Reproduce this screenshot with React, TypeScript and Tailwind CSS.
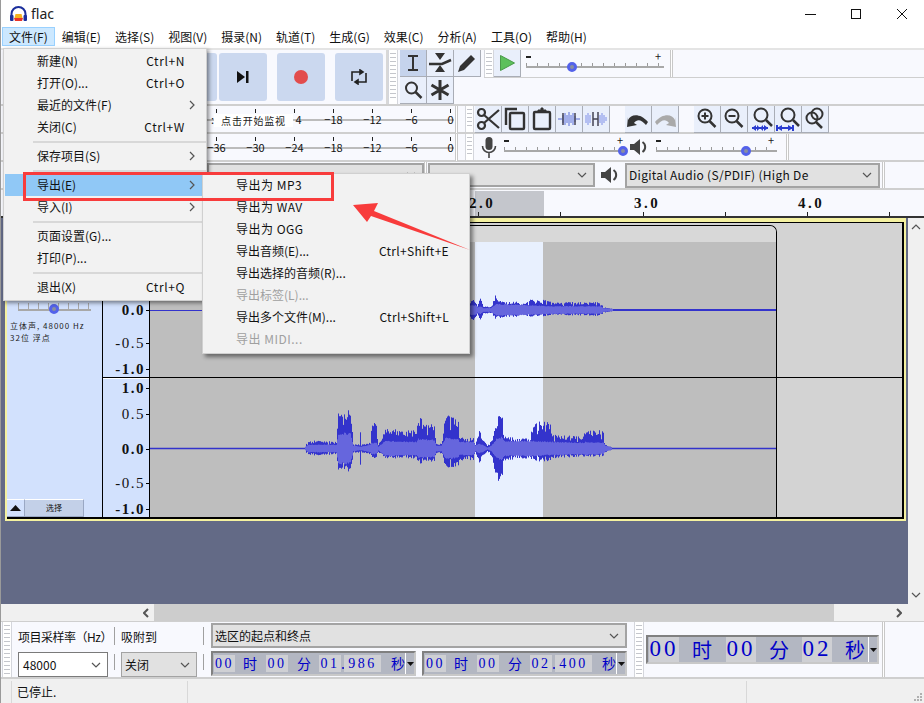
import React from "react";

const grip =
  "bg-[repeating-linear-gradient(to_bottom,#c4c6cc_0,#c4c6cc_1px,transparent_1px,transparent_4px)]";

function Gripper({ className = "" }: { className?: string }) {
  return (
    <div className={`shrink-0 border-x border-[#d4d6dc] bg-white px-[1px] py-[3px] ${className}`}>
      <div className={`h-full w-full ${grip}`} />
    </div>
  );
}

function ToolBtn({ active, children }: { active?: boolean; children?: React.ReactNode }) {
  return (
    <div
      className={`flex h-[27px] w-[27px] shrink-0 items-center justify-center border-b border-r border-[#a9adb6] ${
        active ? "bg-[#c5d3ec]" : "bg-[#e9effb]"
      }`}
    >
      {children}
    </div>
  );
}

function Ico({ children, w = 24, h = 24, className = "" }: { children: React.ReactNode; w?: number; h?: number; className?: string }) {
  return (
    <svg width={w} height={h} viewBox={`0 0 ${w} ${h}`} fill="none" stroke="#333" strokeWidth="2" className={className}>
      {children}
    </svg>
  );
}

function Slider({ width, knob }: { width: number; knob: number }) {
  // knob is px from the left of the track
  return (
    <div className="relative h-[24px] shrink-0" style={{ width }}>
      <span className="absolute left-0 top-[6px] h-[1.5px] w-[5px] bg-[#222]" />
      <span className="absolute right-[3px] top-[3px] text-[11px] leading-[7px] text-[#222]">+</span>
      <div className="absolute inset-x-0 top-[13px] h-[3px] bg-[repeating-linear-gradient(to_right,#9a9a9a_0,#9a9a9a_1px,transparent_1px,transparent_11px)]" />
      <div className="absolute inset-x-0 top-[16px] h-[2px] bg-[#a8a8a8]" />
      <div
        className="absolute top-[12px] h-[10px] w-[10px] -translate-x-1/2 rounded-full border-[3px] border-[#5462ea] bg-[#8a8fa0]"
        style={{ left: knob }}
      />
    </div>
  );
}

function Meter({ labels, overlay }: { labels: string[]; overlay?: boolean }) {
  return (
    <div className="relative flex h-[27px] w-[458px] shrink-0 pl-[197px]">
      <div className="absolute left-[197px] right-[4px] top-[13px] h-[2px] bg-[#bcbcbc]" />
      {labels.map((l, i) => (
        <div key={i} className="relative flex h-full w-[39px] shrink-0 items-end justify-center pb-[7px] text-[11px] leading-[14px] text-[#111]">
          <span className="absolute left-[19px] top-[3px] h-[4px] w-px bg-[#222]" />
          <span className={l === "4" ? "relative translate-x-[4px]" : l === ":" ? "relative -translate-x-[4px]" : "relative"}>{l.replace("-", "−")}</span>
        </div>
      ))}
      {overlay && (
        <div className="absolute left-[214px] top-[8px] flex h-[13px] w-[79px] items-center justify-center bg-white text-[10px] tracking-[0.8px] text-[#222]">
          点击开始监视
        </div>
      )}
      <div className="absolute right-0 top-0 h-full w-[3px] border-x border-[#c8c8c8] bg-white" />
    </div>
  );
}

type Seg = [number, number, number, number];

const bottomEnv: Seg[] = [
  [305, 3, 3, 2], [308, 8, 7, 4], [320, 8, 7, 4], [336, 7, 6, 4], [338, 40, 24, 16], [350, 40, 24, 16],
  [353, 5, 5, 3], [359, 4, 4, 2], [360, 18, 18, 2], [361, 4, 4, 2], [370, 6, 6, 4], [371, 27, 10, 6],
  [376, 27, 10, 6], [378, 4, 4, 2], [385, 20, 10, 8], [416, 18, 10, 7], [418, 33, 16, 10], [434, 25, 14, 9],
  [436, 5, 5, 3], [441, 5, 5, 3], [445, 34, 19, 11], [458, 30, 19, 10], [459, 11, 12, 7], [473, 11, 12, 7],
  [475, 5, 5, 3], [479, 20, 16, 5], [482, 10, 8, 4], [487, 3, 3, 1], [491, 8, 8, 3], [496, 25, 30, 10],
  [501, 43, 36, 12], [504, 12, 12, 8], [530, 10, 10, 8], [532, 27, 13, 8], [550, 27, 13, 7], [552, 14, 10, 7],
  [583, 12, 8, 6], [585, 20, 9, 7], [603, 18, 8, 6], [605, 4, 4, 3], [612, 1, 1, 1],
];

const topEnv: Seg[] = [
  [440, 10, 10, 5], [475, 10, 10, 5], [477, 4, 4, 3], [480, 12, 10, 4], [483, 4, 4, 2], [490, 3, 3, 2],
  [496, 17, 10, 6], [500, 9, 8, 6], [528, 8, 6, 5], [530, 11, 7, 5], [550, 10, 6, 4], [552, 8, 5, 4],
  [600, 8, 6, 4], [603, 3, 3, 2], [613, 1, 1, 1],
];

function wavePaths(env: Seg[], cy: number, seed: number) {
  let r = seed;
  const rand = () => {
    r = (r * 16807) % 2147483647;
    return r / 2147483647;
  };
  let outer = "";
  let inner = "";
  for (let i = 0; i < env.length - 1; i++) {
    const [x0, u0, d0, n0] = env[i];
    const [x1, u1, d1, n1] = env[i + 1];
    for (let x = x0; x < x1; x++) {
      const t = (x - x0) / (x1 - x0);
      const k = 0.45 + 0.55 * Math.sqrt(rand());
      const u = (u0 + (u1 - u0) * t) * k;
      const d = (d0 + (d1 - d0) * t) * k;
      const n = n0 + (n1 - n0) * t;
      outer += `M${x + 0.5} ${(cy - u).toFixed(1)}V${(cy + d).toFixed(1)}`;
      inner += `M${x + 0.5} ${(cy - n * (0.85 + 0.15 * rand())).toFixed(1)}V${(cy + n * (0.85 + 0.15 * rand())).toFixed(1)}`;
    }
  }
  return { outer, inner };
}

function Wave() {
  const b = wavePaths(bottomEnv, 448.5, 1234);
  const t = wavePaths(topEnv, 310, 987);
  return (
    <svg className="absolute left-0 top-0" width="754" height="295" viewBox="150 223 754 295">
      <path d="M150 310.500H440" stroke="#3333cc" strokeWidth="1" fill="none" />
      <path d="M613 310H776" stroke="#3333cc" strokeWidth="2" fill="none" />
      <path d="M150 448.500H305M612 448.500H776" stroke="#3333cc" strokeWidth="1.500" fill="none" />
      <path d={t.outer} stroke="#3333cc" strokeWidth="1" />
      <path d={t.inner} stroke="#6666dd" strokeWidth="1" />
      <path d={b.outer} stroke="#3333cc" strokeWidth="1" />
      <path d={b.inner} stroke="#6666dd" strokeWidth="1" />
    </svg>
  );
}

const mainMenu: (null | { t: string; k?: string; sub?: boolean; sel?: boolean })[] = [
  { t: "新建(N)", k: "Ctrl+N" },
  { t: "打开(O)...", k: "Ctrl+O" },
  { t: "最近的文件(F)", sub: true },
  { t: "关闭(C)", k: "Ctrl+W" },
  null,
  { t: "保存项目(S)", sub: true },
  null,
  { t: "导出(E)", sub: true, sel: true },
  { t: "导入(I)", sub: true },
  null,
  { t: "页面设置(G)..." },
  { t: "打印(P)..." },
  null,
  { t: "退出(X)", k: "Ctrl+Q" },
];

const exportMenu: { t: string; k?: string; off?: boolean; wide?: boolean }[] = [
  { t: "导出为 MP3", wide: true },
  { t: "导出为 WAV", wide: true },
  { t: "导出为 OGG", wide: true },
  { t: "导出音频(E)...", k: "Ctrl+Shift+E" },
  { t: "导出选择的音频(R)..." },
  { t: "导出标签(L)...", off: true },
  { t: "导出多个文件(M)...", k: "Ctrl+Shift+L" },
  { t: "导出 MIDI...", off: true, wide: true },
];

function Chevron({ className = "" }: { className?: string }) {
  return (
    <svg width="10" height="6" viewBox="0 0 10 6" fill="none" stroke="#555" strokeWidth="1.2" className={className}>
      <path d="M1 1l4 4 4-4" />
    </svg>
  );
}

function Combo({ className = "", children }: { className?: string; children?: React.ReactNode }) {
  return (
    <div className={`flex items-center justify-between border-2 border-[#a3a3a3] bg-[#e1e1e1] pl-[2px] pr-[6px] text-[12px] text-[#111] ${className}`}>
      <span>{children}</span>
      <Chevron />
    </div>
  );
}

function Cell({ children, className = "" }: { children: React.ReactNode; className?: string }) {
  return <span className={`flex h-[17px] shrink-0 items-center justify-center bg-[#cfd0d4] font-['Liberation_Serif',serif] text-[14px] tracking-[2.5px] text-[#0000c8] ${className}`}>{children}</span>;
}

function Unit({ children, className = "" }: { children: React.ReactNode; className?: string }) {
  return <span className={`w-[14px] shrink-0 text-[14px] leading-[17px] text-[#0000c8] ${className}`}>{children}</span>;
}

function Drop({ className = "" }: { className?: string }) {
  return (
    <div className={`ml-auto flex h-full w-[9px] shrink-0 items-center justify-center border-l border-white ${className}`}>
      <svg width="7" height="4" viewBox="0 0 7 4"><path d="M0 0h7L3.500 4z" fill="#111" /></svg>
    </div>
  );
}

function Timer({ a, b, c, d, className = "" }: { a: string; b: string; c: string; d: string; className?: string }) {
  return (
    <div className={`flex h-[25px] w-[205px] shrink-0 items-center border-2 border-[#808080] border-b-[#c8c8c8] border-r-[#c8c8c8] bg-[#b3b7c2] pl-[1px] ${className}`}>
      <Cell className="w-[21px]">{a}</Cell>
      <Unit className="ml-[8px]">时</Unit>
      <Cell className="ml-[9px] w-[22px]">{b}</Cell>
      <Unit className="ml-[9px]">分</Unit>
      <Cell className="ml-[8px] w-[22px]">{c}</Cell>
      <span className="w-[3px] text-[14px] leading-[17px] text-[#0000c8]">.</span>
      <Cell className="w-[37px]">{d}</Cell>
      <Unit className="ml-[10px]">秒</Unit>
      <Drop />
    </div>
  );
}

export default function App() {
  const menus = ["编辑(E)", "选择(S)", "视图(V)", "摄录(N)", "轨道(T)", "生成(G)", "效果(C)", "分析(A)", "工具(O)", "帮助(H)"];
  const scaleTop = [
    { t: "1.0", b: true, c: "top-[18px]" },
    { t: "0.5", b: false, c: "top-[46px]" },
    { t: "0.0", b: true, c: "top-[79px]" },
    { t: "-0.5", b: false, c: "top-[112px]" },
    { t: "-1.0", b: true, c: "top-[138px]" },
  ];
  const scaleBottom = [
    { t: "1.0", b: true, c: "top-[1px]" },
    { t: "0.5", b: false, c: "top-[27px]" },
    { t: "0.0", b: true, c: "top-[62px]" },
    { t: "-0.5", b: false, c: "top-[96px]" },
    { t: "-1.0", b: true, c: "top-[122px]" },
  ];

  return (
    <div className="relative flex h-[703px] w-[924px] flex-col overflow-hidden bg-white font-['Noto_Sans_CJK_SC','Noto_Sans',sans-serif] text-[12px] text-[#111]">
      {/* title bar */}
      <div className="flex h-[27px] shrink-0 items-center pl-[10px]">
        <svg width="17" height="16" viewBox="0 0 17 16">
          <path d="M1.500 11V8a7 7 0 0 1 14 0v3" fill="none" stroke="#1b2f9c" strokeWidth="2" />
          <rect x="0" y="9" width="3.500" height="6" rx="1" fill="#1b2f9c" />
          <rect x="13.500" y="9" width="3.500" height="6" rx="1" fill="#1b2f9c" />
          <path d="M4 12h9l-1 3H5z" fill="#e8352a" />
          <path d="M5.500 8h6l1 4h-8z" fill="#f5b21d" />
        </svg>
        <span className="ml-[4px] font-['Noto_Sans',sans-serif] text-[14px] text-[#222]">flac</span>
        <svg className="ml-auto mr-[15px]" width="104" height="12" viewBox="0 0 104 12" fill="none" stroke="#111" strokeWidth="1">
          <path d="M0 6.500H11" />
          <rect x="46.500" y="1.500" width="9" height="9" />
          <path d="M92 1l10 10M102 1L92 11" />
        </svg>
      </div>

      {/* menu bar */}
      <div className="flex h-[23px] shrink-0 items-center gap-[14px] border-b-2 border-[#e4e4e4] pl-[9px] pb-[2px]">
        <span className="-mx-[7px] border border-[#99d1ff] bg-[#cce8ff] px-[6px] leading-[17px]">文件(F)</span>
        {menus.map((m) => (
          <span key={m}>{m}</span>
        ))}
      </div>

      {/* toolbars */}
      <div className="flex h-[56px] shrink-0 border-b-2 border-[#cfcfcf] bg-[#f8f9fe]">
        <div className="flex h-full w-[388px] shrink-0 items-center gap-[10px] pl-[169px] border-r-2 border-[#d8d8d8]">
          <div className="mr-[-8px] h-[48px] w-[48px] shrink-0 rounded-[3px] bg-[#cbd8ef]" />
          {[
            <svg key="s" width="14" height="14" viewBox="0 0 14 14"><path d="M1 1l8 6-8 6z" fill="#111" /><rect x="10" y="1" width="2.500" height="12" fill="#111" /></svg>,
            <div key="r" className="h-[14px] w-[14px] rounded-full bg-[#e24c4c]" />,
            <svg key="l" width="16" height="16" viewBox="0 0 16 16" fill="none" stroke="#222" strokeWidth="1.600"><path d="M1 12V3h10M15 4v9H5" /><path d="M9 1l3 2-3 2zM7 11l-3 2 3 2z" fill="#222" /></svg>,
          ].map((ic) => (
            <div key={ic.key} className="flex h-[48px] w-[48px] shrink-0 items-center justify-center rounded-[3px] bg-[#cbd8ef]">
              {ic}
            </div>
          ))}
        </div>
        <Gripper className="w-[10px]" />
        <div className="ml-[2px] flex w-[84px] shrink-0 flex-col">
          <div className="flex h-[27px]">
            <ToolBtn active>
              <Ico w={14} h={18}><path d="M2 2h10M7 2v14M2 16h10" /></Ico>
            </ToolBtn>
            <ToolBtn>
              <svg width="24" height="20" viewBox="0 0 24 20"><path d="M7 0h10l-5 7zM7 19h10l-5-7z" fill="#333" /><path d="M1 11h13l9-4" fill="none" stroke="#333" strokeWidth="2.500" /></svg>
            </ToolBtn>
            <ToolBtn>
              <svg width="20" height="20" viewBox="0 0 20 20"><path d="M1 19l2-6L14 2l4 4L7 17z" fill="#333" /></svg>
            </ToolBtn>
          </div>
          <div className="flex h-[27px]">
            <ToolBtn>
              <Ico w={20} h={20}><circle cx="8.500" cy="8" r="5.500" /><path d="M12.500 12l6 6" strokeWidth="2.500" /></Ico>
            </ToolBtn>
            <ToolBtn>
              <Ico w={20} h={20}><path d="M10 0v20M1.500 5l17 10M18.500 5l-17 10" strokeWidth="3" /></Ico>
            </ToolBtn>
          </div>
        </div>
        <div className="flex flex-1 flex-col">
          <div className="flex h-[28px] border-b border-[#cfcfcf]">
            <Gripper className="w-[10px]" />
            <ToolBtn>
              <svg width="17" height="18" viewBox="0 0 17 18"><path d="M1.500 1.500L15.500 9 1.500 16.500z" fill="#5cc05c" stroke="#4a9a4a" /></svg>
            </ToolBtn>
            <div className="ml-[5px]">
              <Slider width={138} knob={46} />
            </div>
            <div className="ml-[6px] h-full w-[3px] border-x border-[#c8c8c8] bg-white" />
          </div>
        </div>
      </div>

      <div className="flex h-[28px] shrink-0 border-b-2 border-[#cfcfcf] bg-[#f8f9fe]">
        <Meter overlay labels={[":", "", "4", "-18", "-12", "-6", "0"]} />
        <Gripper className="ml-[7px] w-[9px]" />
        <div className="ml-[1px] flex">
          <ToolBtn>
            <svg width="24" height="24" viewBox="0 0 24 24" fill="none" stroke="#333" strokeWidth="2.200"><circle cx="5.500" cy="5.500" r="3.500" /><circle cx="5.500" cy="18.500" r="3.500" /><path d="M8 8l15 13M8 16L23 3" /></svg>
          </ToolBtn>
          <ToolBtn>
            <svg width="22" height="24" viewBox="0 0 22 24" fill="none" stroke="#333" strokeWidth="2.400"><path d="M13 2H2v16" /><rect x="6" y="6" width="14" height="16" rx="1" /></svg>
          </ToolBtn>
          <ToolBtn>
            <svg width="20" height="24" viewBox="0 0 20 24" fill="none" stroke="#333" strokeWidth="2.400"><rect x="2" y="5" width="16" height="17" rx="1" /><path d="M6 5V3h3V1h2v2h3v2z" fill="#333" strokeWidth="1" /></svg>
          </ToolBtn>
          <ToolBtn>
            <svg width="22" height="16" viewBox="0 0 22 16" fill="none" stroke="#5a6fd8" strokeWidth="1"><path d="M0 8h4M18 8h4M5 4v8M7 2v12M9 4v8M11 1v14M13 4v8M15 2v12M17 5v6" /><path d="M5 2v12M17 2v12" stroke="#445" strokeWidth="1.500" /></svg>
          </ToolBtn>
          <ToolBtn>
            <svg width="22" height="16" viewBox="0 0 22 16" fill="none" stroke="#7f8fe8" strokeWidth="1"><path d="M1 4v8M3 2v12M5 4v8M15 4v8M17 2v12M19 4v8M21 6v4" /><path d="M8 1v14M13 1v14M8 8h5" stroke="#445" strokeWidth="1.500" /></svg>
          </ToolBtn>
          <div className="w-[15px]" />
          <ToolBtn>
            <svg width="24" height="16" viewBox="0 0 24 16"><path d="M2 9c3-6 12-7 20 2l-2 3c-5-6-9-6-12-2l3 2-10 2 1-10z" fill="#333" /></svg>
          </ToolBtn>
          <ToolBtn>
            <svg width="24" height="16" viewBox="0 0 24 16"><path d="M22 9C19 3 10 2 2 11l2 3c5-6 9-6 12-2l-3 2 10 2-1-10z" fill="#a9a9a9" /></svg>
          </ToolBtn>
          <div className="w-[15px]" />
          <ToolBtn>
            <Ico><circle cx="10" cy="9" r="6.500" /><path d="M14.500 14l6 6" strokeWidth="2.500" /><path d="M6.500 9h7M10 5.500v7" /></Ico>
          </ToolBtn>
          <ToolBtn>
            <Ico><circle cx="10" cy="9" r="6.500" /><path d="M14.500 14l6 6" strokeWidth="2.500" /><path d="M6.500 9h7" /></Ico>
          </ToolBtn>
          <ToolBtn>
            <svg width="24" height="24" viewBox="0 0 24 24" fill="none" stroke="#333" strokeWidth="2"><circle cx="12" cy="8" r="6.500" /><path d="M17 13l6 6" strokeWidth="2.500" /><path d="M3 21h16" stroke="#2a3ccf" /><path d="M3 21l4-3v6zM19 21l-4-3v6zM11 21l3-3v6zM11 21l-3-3v6z" fill="#2a3ccf" stroke="none" /></svg>
          </ToolBtn>
          <ToolBtn>
            <svg width="24" height="24" viewBox="0 0 24 24" fill="none" stroke="#333" strokeWidth="2"><circle cx="12" cy="8" r="6.500" /><path d="M17 13l6 6" strokeWidth="2.500" /><path d="M1 21h16" stroke="#2a3ccf" /><path d="M1 21l5-3v6zM17 21l-5-3v6z" fill="#2a3ccf" stroke="none" /><path d="M1 18v6M17 18v6" stroke="#2a3ccf" /></svg>
          </ToolBtn>
          <ToolBtn>
            <Ico><circle cx="9" cy="11" r="5.500" /><circle cx="14" cy="7" r="5.500" /><path d="M13 15l6 6" strokeWidth="2.500" /></Ico>
          </ToolBtn>
        </div>
      </div>

      <div className="flex h-[28px] shrink-0 border-b-2 border-[#cfcfcf] bg-[#f8f9fe]">
        <Meter labels={["-36", "-30", "-24", "-18", "-12", "-6", "0"]} />
        <Gripper className="ml-[7px] w-[9px]" />
        <div className="ml-[7px] mt-[3px] shrink-0">
          <svg width="16" height="22" viewBox="0 0 16 22"><rect x="4.500" y="0" width="7" height="13" rx="3.500" fill="#444" /><path d="M1.500 9a6.500 6.500 0 0 0 13 0M8 16v5" fill="none" stroke="#444" strokeWidth="1.600" /></svg>
        </div>
        <div className="ml-[7px] shrink-0">
          <Slider width={122} knob={119} />
        </div>
        <div className="ml-[4px] mt-[4px] shrink-0">
          <svg width="19" height="18" viewBox="0 0 19 18"><path d="M0 6h4l6-5v16l-6-5H0z" fill="#444" /><path d="M12.500 4a6 6 0 0 1 0 10" fill="none" stroke="#444" strokeWidth="2" /></svg>
        </div>
        <div className="ml-[7px] shrink-0">
          <Slider width={121} knob={90} />
        </div>
        <div className="ml-[9px] h-full w-[3px] border-x border-[#c8c8c8] bg-white" />
      </div>

      <div className="flex h-[28px] shrink-0 items-center border-b-2 border-[#cfcfcf] bg-[#f8f9fe]">
        <Combo className="ml-[207px] h-[24px] w-[217px]" />
        <div className="h-full w-[3px] border-x border-[#c8c8c8] bg-white" />
        <Combo className="ml-[1px] h-[24px] w-[167px]" />
        <svg className="ml-[6px] shrink-0" width="19" height="18" viewBox="0 0 19 18"><path d="M0 6h4l6-5v16l-6-5H0z" fill="#444" /><path d="M12.500 4a6 6 0 0 1 0 10" fill="none" stroke="#444" strokeWidth="2" /></svg>
        <Combo className="ml-[5px] h-[25px] w-[255px] tracking-[0.3px]">Digital Audio (S/PDIF) (High De</Combo>
        <div className="ml-[2px] h-full w-[3px] border-x border-[#c8c8c8] bg-white" />
      </div>

      {/* ruler */}
      <div className="relative h-[28px] shrink-0 border-b-2 border-[#333] bg-[#f8f9fe] font-['Liberation_Serif',serif] text-[15px] font-bold tracking-[2.500px] text-[#111]">
        <div className="absolute bottom-0 left-[475px] top-[1px] w-[69px] bg-[#c4c6cc]" />
        <span className="absolute left-[469px] top-[2px]">2.0</span>
        <span className="absolute left-[634px] top-[2px]">3.0</span>
        <span className="absolute left-[798px] top-[2px]">4.0</span>
        <span className="absolute bottom-0 left-[478px] h-[4px] w-px bg-[#222]" />
        <span className="absolute bottom-0 left-[560px] h-[4px] w-px bg-[#222]" />
        <span className="absolute bottom-0 left-[643px] h-[4px] w-px bg-[#222]" />
        <span className="absolute bottom-0 left-[725px] h-[4px] w-px bg-[#222]" />
        <span className="absolute bottom-0 left-[807px] h-[4px] w-px bg-[#222]" />
        <span className="absolute bottom-0 left-[889px] h-[4px] w-px bg-[#222]" />
      </div>

      {/* track area */}
      <div className="flex h-[386px] shrink-0">
        <div className="flex w-[908px] shrink-0 flex-col bg-[#636a86] pl-[5px]">
          <div className="flex h-[303px] w-[901px] shrink-0 border-x-2 border-b-2 border-t-[4px] border-[#f4f1a0]">
            <div className="flex h-[297px] w-[897px] border-b-2 border-r-2 border-t border-black">
              <div className="flex w-[96px] shrink-0 flex-col border-r border-black bg-[#d2e1fd]">
                <div className="mt-[80px] flex px-[11px]">
                  <div className="relative h-[8px] w-[75px] border-b-2 border-[#a8a8a8] bg-[repeating-linear-gradient(to_right,#a8a8a8_0,#a8a8a8_1px,transparent_1px,transparent_10px)]">
                    <div className="absolute left-[31px] top-[1px] h-[10px] w-[10px] rounded-full border-[3px] border-[#5462ea] bg-[#8a8fa0]" />
                  </div>
                </div>
                <div className="ml-[3px] mt-[9px] whitespace-nowrap text-[8px] leading-[12px] tracking-[1px] text-[#222]">立体声, 48000 Hz</div>
                <div className="ml-[3px] text-[8px] leading-[12px] tracking-[1px] text-[#222]">32位 浮点</div>
                <div className="mt-auto flex h-[18px] text-[8px]">
                  <div className="flex w-[18px] items-center justify-center border-b border-r border-t border-[#9aa8c4] border-t-white">
                    <svg width="11" height="6" viewBox="0 0 11 6"><path d="M5.500 0L11 6H0z" fill="#111" /></svg>
                  </div>
                  <div className="flex w-[59px] items-center justify-center border-b border-r border-t border-[#9aa8c4] border-t-white bg-[#c3d0e8]">选择</div>
                </div>
              </div>
              <div className="flex w-[47px] shrink-0 flex-col border-r border-black bg-[#d2e1fd] font-['Liberation_Serif',serif] text-[15px] tracking-[1.500px] text-[#111]">
                <div className="relative h-[155px] shrink-0 border-b border-black">
                  {scaleTop.map((s) => (
                    <div key={s.t} className={`absolute right-0 flex h-[16px] items-center ${s.c}`}>
                      <span className={s.b ? "font-bold" : ""}>{s.t}</span>
                      <span className="ml-[1px] h-px w-[3px] bg-black" />
                    </div>
                  ))}
                </div>
                <div className="relative flex-1 border-t border-white">
                  {scaleBottom.map((s) => (
                    <div key={s.t + "b"} className={`absolute right-0 flex h-[16px] items-center ${s.c}`}>
                      <span className={s.b ? "font-bold" : ""}>{s.t}</span>
                      <span className="ml-[1px] h-px w-[3px] bg-black" />
                    </div>
                  ))}
                </div>
              </div>
              <div className="relative flex-1 bg-[#d3d3d3]">
                <div className="absolute bottom-0 left-0 top-[2px] w-[627px] rounded-tr-[7px] border-r border-t border-black bg-[#bebebe]">
                  <div className="h-[16px] rounded-tr-[6px] bg-[#d8d8d8]" />
                </div>
                <div className="absolute bottom-0 left-[325px] top-[19px] w-[68px] bg-[#e8f0fe]" />
                <div className="absolute inset-x-0 top-[154px] h-px bg-black" />
                <Wave />
              </div>
            </div>
          </div>
        </div>
        <div className="flex w-[16px] shrink-0 flex-col items-center justify-between bg-[#f0f0f0] py-[6px]">
          <Chevron className="rotate-180" />
          <Chevron />
        </div>
      </div>

      {/* horizontal scrollbar */}
      <div className="flex h-[17px] shrink-0 items-center bg-[#f0f0f0]">
        <svg className="ml-[143px] shrink-0" width="6" height="10" viewBox="0 0 6 10" fill="none" stroke="#555" strokeWidth="2"><path d="M5 1L1 5l4 4" /></svg>
        <div className="ml-[5px] h-full w-[680px] bg-[#cdcdcd]" />
        <svg className="ml-[62px] shrink-0" width="6" height="10" viewBox="0 0 6 10" fill="none" stroke="#555" strokeWidth="2"><path d="M1 1l4 4-4 4" /></svg>
      </div>

      {/* selection toolbar */}
      <div className="flex h-[58px] shrink-0 border-b-2 border-t border-[#cfcfcf] bg-[#f8f9fe] pl-[2px]">
        <Gripper className="w-[10px]" />
        <div className="ml-[6px] flex w-[92px] shrink-0 flex-col pt-[3px]">
          <div className="h-[24px] whitespace-nowrap text-[12px] leading-[24px] tracking-[-0.5px]">项目采样率（Hz）</div>
          <div className="mt-[3px] flex h-[25px] w-[90px] items-center justify-between border border-[#7a7a7a] bg-white pl-[4px] pr-[6px]">
            <span>48000</span>
            <Chevron />
          </div>
        </div>
        <div className="ml-[4px] flex w-px shrink-0 flex-col pt-[5px]">
          <div className="h-[18px] bg-[#a0a0a0]" />
          <div className="mt-[9px] h-[16px] bg-[#a0a0a0]" />
        </div>
        <div className="ml-[6px] flex w-[75px] shrink-0 flex-col pt-[3px]">
          <div className="h-[24px] leading-[24px]">吸附到</div>
          <Combo className="mt-[3px] h-[25px] w-[76px] border! pl-[3px]!">关闭</Combo>
        </div>
        <div className="ml-[7px] flex w-px shrink-0 flex-col pt-[5px]">
          <div className="h-[18px] bg-[#a0a0a0]" />
          <div className="mt-[9px] h-[16px] bg-[#a0a0a0]" />
        </div>
        <div className="ml-[7px] flex w-[416px] shrink-0 flex-col pt-[1px]">
          <Combo className="h-[25px] w-[416px]">选区的起点和终点</Combo>
          <div className="mt-[3px] flex justify-between">
            <Timer a="00" b="00" c="01" d="986" />
            <Timer a="00" b="00" c="02" d="400" />
          </div>
        </div>
        <Gripper className="ml-[7px] w-[10px]" />
        <div className="ml-[2px] mt-[13px] flex h-[29px] w-[233px] shrink-0 items-center border-2 border-[#808080] border-b-[#c8c8c8] border-r-[#c8c8c8] bg-[#b3b7c2] pl-[1px] text-[#0000c8]">
          <span className="flex h-[25px] w-[30px] shrink-0 items-center justify-center bg-[#cfd0d4] font-['Liberation_Serif',serif] text-[23px] tracking-[3px]">00</span>
          <span className="ml-[13px] w-[21px] shrink-0 text-[20px] leading-[25px]">时</span>
          <span className="ml-[13px] flex h-[25px] w-[30px] shrink-0 items-center justify-center bg-[#cfd0d4] font-['Liberation_Serif',serif] text-[23px] tracking-[3px]">00</span>
          <span className="ml-[13px] w-[21px] shrink-0 text-[20px] leading-[25px]">分</span>
          <span className="ml-[12px] flex h-[25px] w-[30px] shrink-0 items-center justify-center bg-[#cfd0d4] font-['Liberation_Serif',serif] text-[23px] tracking-[3px]">02</span>
          <span className="ml-[13px] w-[21px] shrink-0 text-[20px] leading-[25px]">秒</span>
          <Drop />
        </div>
        <div className="ml-[3px] h-full w-[3px] border-x border-[#c8c8c8] bg-white" />
      </div>

      {/* status bar */}
      <div className="relative flex flex-1 items-center bg-[#f0f0f0] pt-[1px]">
        <div className="ml-[11px] flex h-[22px] w-[177px] items-center border-x border-[#d8d8d8] pl-[5px] text-[12px]">已停止.</div>
        <div className="ml-[558px] h-[22px] w-px bg-[#d8d8d8]" />
        <svg className="absolute bottom-[1px] right-[1px]" width="10" height="10" viewBox="0 0 10 10" fill="#b0b0b0">
          <rect x="7" y="1" width="2" height="2" /><rect x="4" y="4" width="2" height="2" /><rect x="7" y="4" width="2" height="2" /><rect x="1" y="7" width="2" height="2" /><rect x="4" y="7" width="2" height="2" /><rect x="7" y="7" width="2" height="2" />
        </svg>
      </div>

      {/* window edge */}
      <div className="absolute inset-y-0 left-0 w-px bg-[#9a9a9a]" />

      {/* file menu */}
      <div className="absolute left-[3px] top-[48px] h-[253px] w-[204px] border border-[#d0d0d0] bg-[#f2f2f2] pt-[1px] shadow-[2px_2px_4px_rgba(0,0,0,0.45)]">
        {mainMenu.map((m, i) =>
          m === null ? (
            <div key={i} className="flex h-[7px] items-center pl-[29px]">
              <div className="h-[2px] w-full bg-[#d8d8d8]" />
            </div>
          ) : (
            <div key={m.t} className={`mx-[1px] flex h-[22px] items-center pl-[32px] pr-[20px] ${m.sel ? "bg-[#90c8f6]" : ""}`}>
              <span>{m.t}</span>
              {m.k && <span className="ml-auto tracking-[0.6px]">{m.k}</span>}
              {m.sub && (
                <svg className="ml-auto mr-[-10px]" width="6" height="10" viewBox="0 0 6 10" fill="none" stroke="#555" strokeWidth="1.200"><path d="M1 1l4 4-4 4" /></svg>
              )}
            </div>
          )
        )}
      </div>

      {/* export submenu */}
      <div className="absolute left-[202px] top-[173px] h-[181px] w-[268px] border border-[#d0d0d0] bg-[#f2f2f2] shadow-[3px_3px_4px_rgba(0,0,0,0.45)]">
        {exportMenu.map((m) => (
          <div key={m.t} className={`flex h-[22px] items-center pl-[33px] pr-[20px] ${m.off ? "text-[#a0a0a0]" : ""}`}>
            <span className={m.wide ? "tracking-[0.5px]" : ""}>{m.t}</span>
            {m.k && <span className="ml-auto tracking-[0.3px]">{m.k}</span>}
          </div>
        ))}
      </div>

      {/* annotation */}
      <div className="absolute left-[23px] top-[172px] h-[29px] w-[311px] border-[3px] border-[#f83c3c]" />
      <svg className="absolute left-[350px] top-[200px]" width="124" height="54" viewBox="350 200 124 54">
        <path d="M353 205L378 203 374 211 470 250 371 216 367 222z" fill="#f83c3c" />
      </svg>
    </div>
  );
}
